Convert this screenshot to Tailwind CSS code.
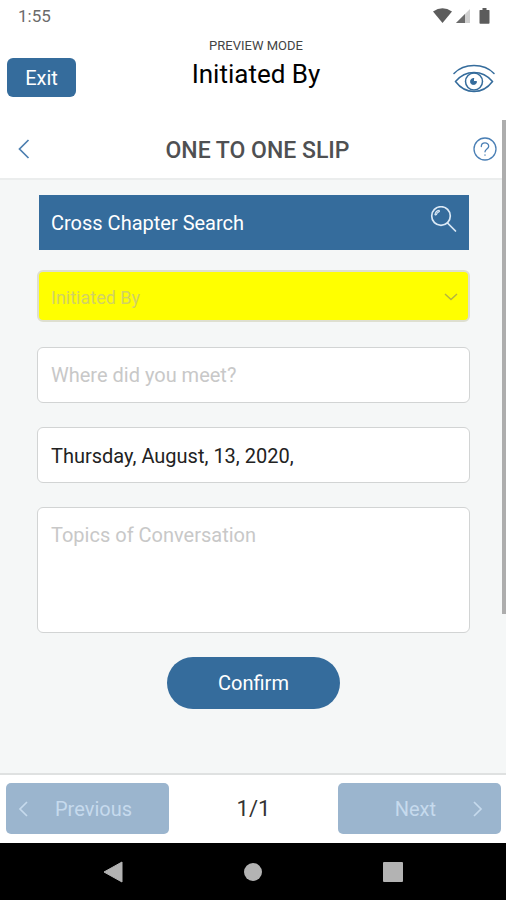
<!DOCTYPE html>
<html lang="en">
<head>
<meta charset="utf-8">
<meta name="viewport" content="width=device-width, initial-scale=1">
<title>One to One Slip</title>
<script src="https://cdn.jsdelivr.net/npm/@tailwindcss/browser@4"></script>
</head>
<body class="flex min-h-screen flex-col bg-white font-['Roboto',sans-serif] text-black">
  <div class="flex h-8 items-center justify-between pl-[18px] pr-4 text-[#6b6b6b]">
    <span class="text-[17px] leading-5">1:55</span>
    <div class="flex items-center">
      <svg class="h-4 w-[19px]" viewBox="0 0 19 16" fill="#5c5c5c" aria-hidden="true"><path d="M0 3.5Q9.500-3 19 3.500L9.500 15Z"/></svg>
      <svg class="ml-1 h-4 w-[14px]" viewBox="0 0 14 16" aria-hidden="true"><path d="M0 15 14 1V15Z" fill="#cfcfcf"/><path d="M0 15 9 6V15Z" fill="#6b6b6b"/></svg>
      <svg class="ml-[9px] h-4 w-[11px]" viewBox="0 0 11 16" fill="#5c5c5c" aria-hidden="true"><path d="M3.500 0h4v2H10q.500 0 .500.500V15q0 .800-.800.800H1.300Q.500 15.800.500 15V2.500Q.500 2 1 2h2.500Z"/></svg>
    </div>
  </div>

  <header class="grid h-[88px] grid-cols-[1fr_auto_1fr] items-start pl-[17px] pr-[11px]">
    <button type="button" class="-ml-[10px] mt-[26px] h-[39px] w-[69px] justify-self-start rounded-md bg-[#356c9c] text-xl text-white">Exit</button>
    <div class="pt-[6px] text-center">
      <p class="text-[13px] leading-4 text-[#444]">PREVIEW MODE</p>
      <h1 class="text-[26px] leading-10">Initiated By</h1>
    </div>
    <button type="button" aria-label="Toggle preview" class="mt-[32px] justify-self-end">
      <svg class="block h-[30px] w-[42px]" viewBox="0 0 42 30" fill="none" stroke="#356c9c" stroke-width="1.500" stroke-linecap="round" aria-hidden="true">
        <path d="M1 9.500Q8.500 1.500 21 1.500T41 9.500"/>
        <path d="M2.500 17.500Q10 8.500 21 8.500T39.500 17.500Q32 27.500 21 27.500T2.500 17.500Z"/>
        <circle cx="21" cy="17.500" r="8.500"/>
        <path d="M20.500 14.500V17.500H23.500A3 3 0 1 1 20.500 14.500Z" fill="#356c9c" stroke-width="1"/>
      </svg>
    </button>
  </header>

  <div class="relative flex flex-1 flex-col">
    <div class="flex h-[60px] items-center justify-between border-b-2 border-[#ebeded] pl-[18px] pr-[9px]">
      <button type="button" aria-label="Back" class="w-6">
        <svg class="block h-5 w-3" viewBox="0 0 12 20" fill="none" stroke="#4d7fb0" stroke-width="1.700" aria-hidden="true"><path d="M10.500 1 1.500 10l9 9"/></svg>
      </button>
      <h2 class="pt-1 text-[23px] font-medium leading-7 text-[#4f5052]">ONE TO ONE SLIP</h2>
      <button type="button" aria-label="Help">
        <svg class="block h-6 w-6" viewBox="0 0 24 24" fill="none" stroke="#4a7fb5" stroke-width="1.300" stroke-linecap="round" aria-hidden="true"><circle cx="12" cy="12" r="11"/><path d="M8.300 9.500C8.300 4.800 15.700 4.800 15.700 9.300 15.700 12 12 12 12 14.800M12 17.800v.400"/></svg>
      </button>
    </div>

    <form class="flex flex-1 flex-col bg-[#f5f7f7] pb-16 pl-[37px] pr-9 pt-[15px] text-xl">
      <button type="button" class="ml-[2px] mr-px flex h-[55px] items-start justify-between bg-[#356c9c] px-3 pt-[11px] text-white">
        <span class="pt-[3px] leading-7">Cross Chapter Search</span>
        <svg class="h-[27px] w-[27px]" viewBox="0 0 27 27" fill="none" stroke="#dbe9f6" stroke-width="1.700" stroke-linecap="round" aria-hidden="true"><circle cx="11" cy="10" r="9.300"/><path d="m17.500 17 8 8"/><path d="M5 8.500Q5.500 5 9 4.300q1 1-.300 1.700Q7 6.700 6.500 8.400 5.700 9.300 5 8.500Z" stroke-width="1.200"/></svg>
      </button>

      <div class="relative mt-5">
        <select aria-label="Initiated By" class="block h-[52px] w-full appearance-none rounded-md border-2 border-[#dedfd0] bg-[#ffff00] px-3 pt-[3px] text-lg text-[#d2d264]">
          <option>Initiated By</option>
        </select>
        <svg class="pointer-events-none absolute right-3 top-[23px] h-2 w-[14px]" viewBox="0 0 14 8" fill="none" stroke="#b4b440" stroke-width="1.500" aria-hidden="true"><path d="m1 1 6 5.500L13 1"/></svg>
      </div>

      <input type="text" aria-label="Where did you meet?" placeholder="Where did you meet?" class="mt-[25px] h-14 rounded-md border border-[#d2d4d4] bg-white px-[13px] placeholder:text-[#c8c8c8]">
      <input type="text" aria-label="Date" value="Thursday, August, 13, 2020," class="mt-6 h-14 rounded-md border border-[#d2d4d4] bg-white px-[13px] pt-[2px] text-[#222]">
      <textarea aria-label="Topics of Conversation" placeholder="Topics of Conversation" class="mt-6 h-[126px] resize-none rounded-md border border-[#d2d4d4] bg-white px-[13px] py-3 leading-[30px] placeholder:text-[#c8c8c8]"></textarea>

      <button type="submit" class="mt-6 h-[52px] w-[173px] self-center rounded-full bg-[#356c9c] text-white">Confirm</button>
    </form>
    <div class="absolute right-0 top-0 h-[494px] w-1 bg-[#adadad]" aria-hidden="true"></div>
  </div>

  <footer class="grid h-[70px] grid-cols-[163px_1fr_163px] items-center border-t-2 border-[#dfe1e1] pb-[2px] pl-[6px] pr-[5px] text-xl">
    <button type="button" disabled class="flex h-[51px] items-center rounded-[5px] bg-[#9bb5ce] pl-3 pt-[2px] text-[#c6daed]">
      <svg class="h-4 w-[10px]" viewBox="0 0 10 16" fill="none" stroke="#c6daed" stroke-width="1.700" aria-hidden="true"><path d="M9 1 2 8l7 7"/></svg>
      <span class="ml-[27px]">Previous</span>
    </button>
    <span class="pt-[2px] text-center text-[22px] text-[#333]">1/1</span>
    <button type="button" disabled class="flex h-[51px] items-center justify-end rounded-[5px] bg-[#9bb5ce] pr-[18px] pt-[2px] text-[#c6daed]">
      <span class="mr-[37px]">Next</span>
      <svg class="h-4 w-[10px]" viewBox="0 0 10 16" fill="none" stroke="#c6daed" stroke-width="1.700" aria-hidden="true"><path d="m1 1 7 7-7 7"/></svg>
    </button>
  </footer>

  <nav aria-label="System" class="flex h-[58px] items-center justify-center gap-[121px] bg-black">
    <button type="button" aria-label="System back"><svg class="block h-[22px] w-5" viewBox="0 0 20 22" fill="#b3b3b3" aria-hidden="true"><path d="M1 11 19 1v20Z" stroke="#b3b3b3" stroke-linejoin="round"/></svg></button>
    <button type="button" aria-label="Home" class="h-[18px] w-[18px] rounded-full bg-[#b3b3b3]"></button>
    <button type="button" aria-label="Recent apps" class="h-5 w-5 rounded-[1px] bg-[#b3b3b3]"></button>
  </nav>
</body>
</html>
